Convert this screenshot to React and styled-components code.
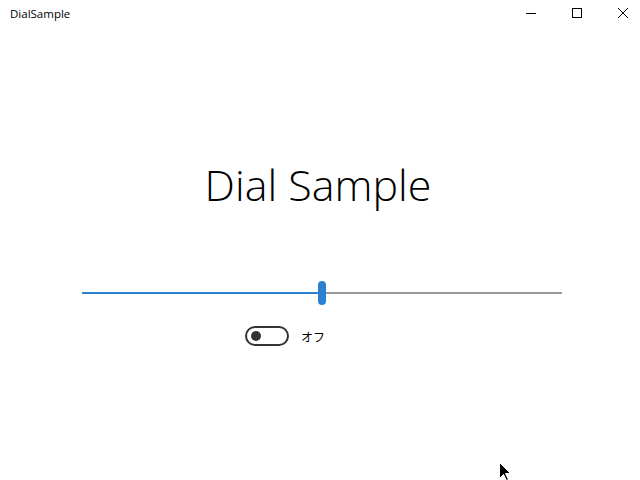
import React, { useState } from 'react';
import styled, { createGlobalStyle } from 'styled-components';

const GlobalStyle = createGlobalStyle`
  html, body {
    margin: 0;
    padding: 0;
    background: #ffffff;
  }
  #root {
    width: 640px;
    height: 480px;
  }
`;

const Window = styled.div`
  position: relative;
  width: 640px;
  height: 480px;
  display: flex;
  flex-direction: column;
  background: #ffffff;
  font-family: "Open Sans", "Noto Sans", sans-serif;
  overflow: hidden;
`;

const TitleBar = styled.div`
  height: 26px;
  display: flex;
  align-items: center;
  justify-content: space-between;
`;

const AppName = styled.span`
  padding-left: 10px;
  font-size: 11.5px;
  color: #000;
`;

const Caption = styled.div`
  display: flex;
  height: 100%;
  margin-right: -6px;
`;

const CaptionButton = styled.div`
  width: 46px;
  height: 100%;
  display: flex;
  align-items: center;
  justify-content: center;
`;

const Content = styled.div`
  flex: 1;
  display: flex;
  flex-direction: column;
  align-items: center;
  padding-left: 4px;
`;

const Heading = styled.h1`
  margin: 129px 8px 0 0;
  font-weight: 300;
  font-size: 43px;
  line-height: 60px;
  color: #000;
`;

const SliderBox = styled.div`
  margin-top: 66px;
  width: 480px;
  height: 24px;
  display: flex;
  align-items: center;
`;

const Track = styled.div`
  height: 2px;
  background: ${p => p.$color};
  flex: ${p => p.$grow};
`;

const Thumb = styled.div`
  width: 8px;
  height: 24px;
  border-radius: 4px;
  background: #2b81d1;
  flex-shrink: 0;
`;

const ToggleRow = styled.label`
  margin-top: 21px;
  width: 154px;
  display: flex;
  align-items: center;
  gap: 12px;
  cursor: pointer;
`;

const Switch = styled.div`
  box-sizing: border-box;
  width: 44px;
  height: 20px;
  border: 2px solid #333333;
  border-radius: 10px;
  display: flex;
  align-items: center;
  justify-content: ${p => (p.$on ? 'flex-end' : 'flex-start')};
  padding: 0 4px;
  background: ${p => (p.$on ? '#2b81d1' : 'transparent')};
`;

const Knob = styled.div`
  width: 10px;
  height: 10px;
  border-radius: 50%;
  background: ${p => (p.$on ? '#fff' : '#333333')};
`;

const SwitchText = styled.span`
  font-family: "Noto Sans CJK JP", sans-serif;
  font-size: 12px;
  color: #000;
`;

const Cursor = styled.svg`
  position: absolute;
  left: 499px;
  top: 462px;
`;

export default function App() {
  const [value] = useState(50);
  const [on, setOn] = useState(false);

  return (
    <>
      <GlobalStyle />
      <Window>
        <TitleBar>
          <AppName>DialSample</AppName>
          <Caption>
            <CaptionButton>
              <svg width="10" height="10" viewBox="0 0 10 10">
                <path d="M0 5.5h10" stroke="#000" strokeWidth="1" />
              </svg>
            </CaptionButton>
            <CaptionButton>
              <svg width="10" height="10" viewBox="0 0 10 10">
                <rect x="0.5" y="0.5" width="9" height="9" fill="none" stroke="#000" strokeWidth="1" />
              </svg>
            </CaptionButton>
            <CaptionButton>
              <svg width="10" height="10" viewBox="0 0 10 10">
                <path d="M0 0L10 10M10 0L0 10" stroke="#000" strokeWidth="1" />
              </svg>
            </CaptionButton>
          </Caption>
        </TitleBar>
        <Content>
          <Heading>Dial Sample</Heading>
          <SliderBox>
            <Track $color="#2b81d1" $grow={value} />
            <Thumb />
            <Track $color="#999999" $grow={100 - value} />
          </SliderBox>
          <ToggleRow onClick={() => setOn(!on)}>
            <Switch $on={on}>
              <Knob $on={on} />
            </Switch>
            <SwitchText>{on ? 'オン' : 'オフ'}</SwitchText>
          </ToggleRow>
        </Content>
        <Cursor width="12" height="19" viewBox="0 0 12 19">
          <path d="M0.5 0.5V16.5L4.5 12.5L7.5 18.5L9.5 17.5L6.5 11.5H11.5Z" fill="#000" stroke="#fff" strokeWidth="1" />
        </Cursor>
      </Window>
    </>
  );
}
